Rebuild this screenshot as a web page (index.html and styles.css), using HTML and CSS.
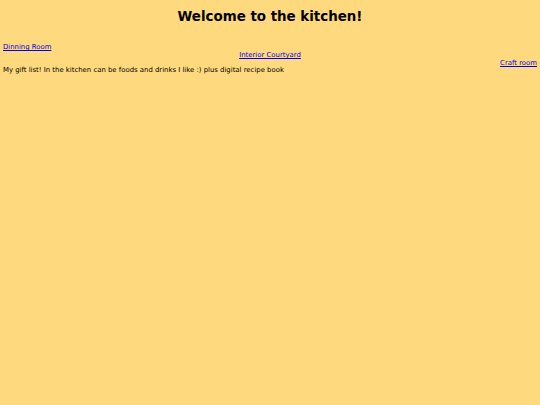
FILE: index.html
```html
<!DOCTYPE html>
<html>
<head>
<meta charset="utf-8">
<link rel="stylesheet" href="styles.css">
</head>
<body>
<h1 class="title">Welcome to the kitchen!</h1>
<div class="nav-left"><a href="#">Dinning Room</a></div>
<div class="nav-center"><a href="#">Interior Courtyard</a></div>
<div class="nav-right"><a href="#">Craft room</a></div>
<p class="text">My gift list! In the kitchen can be foods and drinks I like :) plus digital recipe book</p>
</body>
</html>
```
FILE: styles.css
```css
html, body {
  background: #ffd97d;
}
body {
  margin: 0;
  padding: 4px 3px;
  font-family: "DejaVu Sans", Verdana, sans-serif;
  font-size: 6.9px;
  color: #000;
}
.title {
  font-size: 13.4px;
  text-align: center;
  margin: 4px 0 17px;
  line-height: 18px;
}
.nav-left, .nav-center, .nav-right {
  line-height: 8px;
}
.nav-center { text-align: center; }
.nav-right { text-align: right; }
a { color: #0000ee; }
.text {
  margin: 0;
  line-height: 7px;
}
```
